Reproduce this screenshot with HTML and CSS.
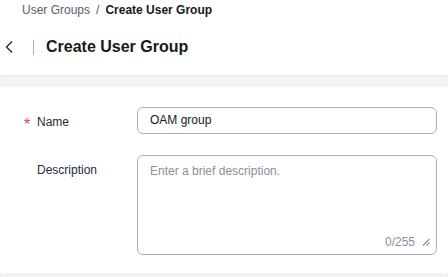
FILE: index.html
```html
<!DOCTYPE html>
<html>
<head>
<meta charset="utf-8">
<link rel="stylesheet" href="styles.css">
</head>
<body>
<div class="page">
  <div class="top">
    <div class="crumbs"><span class="crumb">User Groups</span><span class="sep">/</span><span class="crumb current">Create User Group</span></div>
    <div class="titlebar">
      <svg class="back" width="10" height="14" viewBox="0 0 10 14"><path d="M8 1.5 L2.5 7 L8 12.5" fill="none" stroke="#252b3a" stroke-width="1.4"/></svg>
      <span class="divider"></span>
      <h1 class="title">Create User Group</h1>
    </div>
  </div>
  <div class="content">
    <div class="card">
      <div class="row">
        <label class="label"><span class="req">*</span>Name</label>
        <div class="input">OAM group</div>
      </div>
      <div class="row">
        <label class="label">Description</label>
        <div class="textarea">
          <span class="placeholder">Enter a brief description.</span>
          <div class="foot"><span class="count">0/255</span>
            <svg class="grip" width="8" height="8" viewBox="0 0 8 8"><path d="M7.5 1 L1 7.5 M7.5 4.5 L4.5 7.5" stroke="#8a8e99" stroke-width="1.1"/></svg>
          </div>
        </div>
      </div>
    </div>
  </div>
</div>
</body>
</html>
```
FILE: styles.css
```css
* { box-sizing: border-box; }
html, body { margin: 0; padding: 0; }
body { font-family: "Liberation Sans", Arial, sans-serif; color: #252b3a; background: #f4f4f4; width: 448px; height: 277px; overflow: hidden; }
.page { display: flex; flex-direction: column; height: 277px; }
.top { background: #fff; height: 75px; box-shadow: 0 1px 4px rgba(0,0,0,0.06); position: relative; z-index: 1; }
.crumbs { display: flex; align-items: center; padding: 2px 0 0 22px; height: 17px; font-size: 12px; color: #575d6c; }
.sep { margin: 0 6px; color: #575d6c; }
.current { color: #191919; font-weight: bold; }
.titlebar { display: flex; align-items: center; height: 24px; margin-top: 18px; padding-left: 4px; }
.back { display: block; }
.divider { width: 1px; height: 15px; background: #adb0b8; margin-left: 19px; margin-right: 12px; }
.title { margin: 0; font-size: 16px; font-weight: bold; color: #191919; }
.content { padding-top: 12px; flex: 1; }
.card { background: #fff; border-radius: 4px; height: 186px; padding-top: 20px; }
.row { display: flex; align-items: flex-start; margin-bottom: 21px; }
.label { width: 137px; padding-left: 37px; position: relative; font-size: 12px; color: #252b3a; line-height: 16px; margin-top: 7px; }
.req { position: absolute; left: 24px; top: 3px; color: #e54545; font-size: 16px; line-height: 16px; }
.input { width: 300px; height: 27px; border: 1px solid #adb0b8; border-radius: 6px; padding: 0 12px; font-size: 12px; line-height: 25px; color: #191919; }
.textarea { width: 300px; height: 100px; border: 1px solid #adb0b8; border-radius: 6px; padding: 6px 12px; font-size: 12px; position: relative; display: flex; flex-direction: column; justify-content: space-between; }
.placeholder { color: #8a8e99; line-height: 18px; }
.foot { display: flex; justify-content: flex-end; align-items: center; gap: 7px; margin-right: -6px; margin-bottom: -1px; }
.count { color: #8a8e99; font-size: 12px; }
```
